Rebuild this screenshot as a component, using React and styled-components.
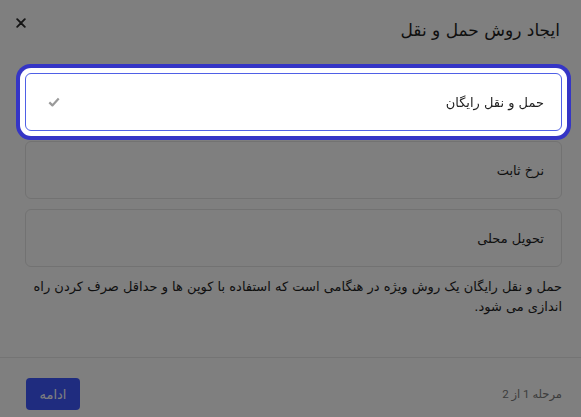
import React, { useState } from "react";
import styled, { createGlobalStyle } from "styled-components";

const GlobalStyle = createGlobalStyle`
  html, body {
    margin: 0;
    padding: 0;
    background: #ffffff;
    font-family: "DejaVu Sans", "Noto Sans", sans-serif;
  }
`;

const methods = [
  { id: "free", label: "حمل و نقل رایگان" },
  { id: "flat", label: "نرخ ثابت" },
  { id: "local", label: "تحویل محلی" },
];

export default function App() {
  const [selected, setSelected] = useState("free");

  return (
    <>
      <GlobalStyle />
      <Dialog dir="rtl">
        <Header>
          <Title>ایجاد روش حمل و نقل</Title>
          <CloseButton aria-label="بستن">
            <svg width="10" height="10" viewBox="0 0 10 10">
              <path
                d="M1.2 1.2 L8.8 8.8 M8.8 1.2 L1.2 8.8"
                stroke="#2a2a2a"
                strokeWidth="1.9"
                strokeLinecap="round"
              />
            </svg>
          </CloseButton>
        </Header>

        <Body>
          <OptionList>
            {methods.map((m) => (
              <Option
                key={m.id}
                $active={selected === m.id}
                onClick={() => setSelected(m.id)}
              >
                <OptionLabel>{m.label}</OptionLabel>
                {selected === m.id && (
                  <svg width="12" height="10" viewBox="0 0 12 10">
                    <path
                      d="M1.3 5.4 L4.4 8.4 L10.7 1.6"
                      fill="none"
                      stroke="#9a9a9a"
                      strokeWidth="2.2"
                      strokeLinejoin="round"
                    />
                  </svg>
                )}
              </Option>
            ))}
          </OptionList>

          <Description>
            حمل و نقل رایگان یک روش ویژه در هنگامی است که استفاده با کوپن ها و
            حداقل صرف کردن راه اندازی می شود.
          </Description>
        </Body>

        <Footer>
          <StepText>مرحله 1 از 2</StepText>
          <PrimaryButton>ادامه</PrimaryButton>
        </Footer>
      </Dialog>
      <Backdrop />
    </>
  );
}

const Dialog = styled.div`
  width: 100%;
  min-height: 417px;
  background: #ffffff;
  color: #222222;
  box-sizing: border-box;
`;

const Header = styled.div`
  display: flex;
  justify-content: space-between;
  align-items: flex-start;
  padding: 18px 21px 0 16px;
`;

const Title = styled.h2`
  margin: 0;
  height: 24px;
  font-size: 17px;
  line-height: 24px;
  font-weight: 400;
  color: #1e1e1e;
`;

const CloseButton = styled.button`
  border: 0;
  background: none;
  padding: 0;
  margin: 0;
  width: 10px;
  height: 10px;
  display: flex;
  cursor: pointer;
`;

const Body = styled.div`
  padding: 31px 19px 40px 25px;
  border-bottom: 1px solid #e8e8e8;
`;

const OptionList = styled.div`
  display: flex;
  flex-direction: column;
  gap: 10px;
`;

const Option = styled.div`
  height: 58px;
  box-sizing: border-box;
  display: flex;
  align-items: center;
  justify-content: space-between;
  padding: 0 17px 0 22px;
  border-radius: 6px;
  border: 1px solid ${(p) => (p.$active ? "#4f60e6" : "#e4e4e4")};
  background: #ffffff;
  cursor: pointer;
  ${(p) =>
    p.$active &&
    `
    position: relative;
    z-index: 20;
    box-shadow: 0 0 0 5px #ffffff, 0 0 0 9px #3535c6;
  `}
`;

const OptionLabel = styled.span`
  font-size: 13px;
  color: #1e1e1e;
`;

const Description = styled.p`
  margin: 10px 0 0;
  font-size: 13px;
  line-height: 20px;
  color: #1e1e1e;
`;

const Footer = styled.div`
  display: flex;
  justify-content: space-between;
  align-items: center;
  padding: 20px 19px 7px 26px;
`;

const StepText = styled.span`
  font-family: "Roboto", "DejaVu Sans", sans-serif;
  font-size: 11.5px;
  color: #7a7a7a;
`;

const PrimaryButton = styled.button`
  height: 32px;
  width: 54px;
  border: 0;
  border-radius: 4px;
  background: #3e58ff;
  color: #ffffff;
  font-family: inherit;
  font-size: 13px;
  cursor: pointer;
`;

const Backdrop = styled.div`
  position: fixed;
  inset: 0;
  background: rgba(0, 0, 0, 0.5);
  z-index: 10;
  pointer-events: none;
`;
